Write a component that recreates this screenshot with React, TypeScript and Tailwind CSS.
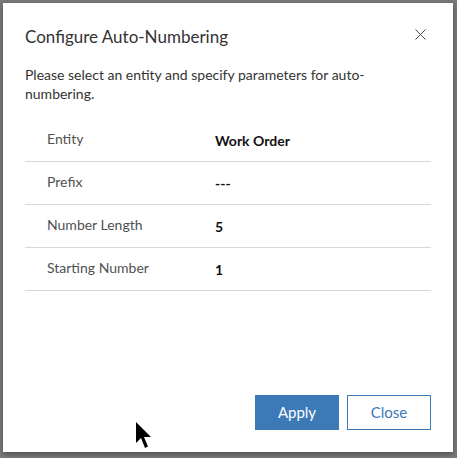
import React from 'react';

const rows = [
  { label: 'Entity', value: 'Work Order' },
  { label: 'Prefix', value: '---' },
  { label: 'Number Length', value: '5' },
  { label: 'Starting Number', value: '1' },
];

const App = () => {
  return (
    <div
      className="relative w-[457px] h-[458px] bg-[#7b7b7b] p-[3px] overflow-hidden"
      style={{ fontFamily: 'Lato, "Open Sans", sans-serif' }}
    >
      {/* Dialog */}
      <div className="w-[450px] h-[449px] bg-white flex flex-col px-[22px] shadow-[0_2px_6px_rgba(0,0,0,0.4)]">
        {/* Header */}
        <div className="flex items-start justify-between pt-[21px]">
          <h1 className="text-[17px] leading-[26px] text-[#333]">
            Configure Auto-Numbering
          </h1>
          <button className="mt-[4px] mr-[5px] w-[12px] h-[12px] flex items-center justify-center text-[#444]">
            <svg width="11" height="11" viewBox="0 0 11 11">
              <path d="M0.5 0.5 L10.5 10.5 M10.5 0.5 L0.5 10.5" stroke="currentColor" strokeWidth="1" />
            </svg>
          </button>
        </div>

        {/* Description */}
        <p className="mt-[15px] text-[14px] leading-[19px] text-[#333]">
          Please select an entity and specify parameters for auto-numbering.
        </p>

        {/* Parameters */}
        <div className="mt-[16px] flex flex-col">
          {rows.map((row) => (
            <div key={row.label} className="flex items-center h-[43px] border-b border-[#d8d8d8]">
              <div className="w-[190px] pl-[22px] text-[14px] text-[#505050] -mt-[3px]">{row.label}</div>
              <div className="text-[14px] font-bold text-[#111]">{row.value}</div>
            </div>
          ))}
        </div>

        {/* Footer */}
        <div className="mt-auto pb-[22px] flex justify-end gap-[8px]">
          <button className="w-[84px] h-[35px] bg-[#3b79b7] text-white text-[15px]">Apply</button>
          <button className="w-[84px] h-[35px] border border-[#3b79b7] text-[#3b79b7] text-[15px]">Close</button>
        </div>
      </div>

      {/* Mouse pointer */}
      <svg className="absolute left-[136px] top-[422px]" width="16" height="27" viewBox="0 0 16 27">
        <path d="M0 0 L0 21 L5 16 L9 26 L12 24.5 L8 15 L15 15 Z" fill="#000" />
      </svg>
    </div>
  );
};

export default App;
